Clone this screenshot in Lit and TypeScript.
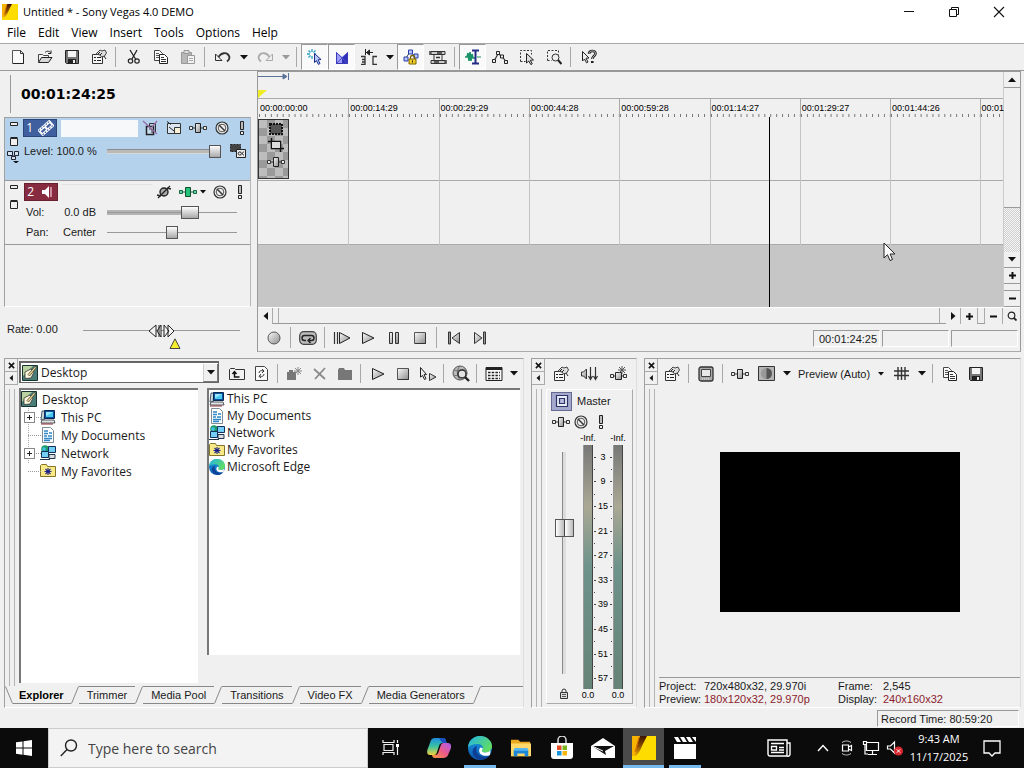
import { LitElement, html, svg, css, type TemplateResult } from "lit";
import { customElement, property } from "lit/decorators.js";

type Glyph = [number, number, TemplateResult];

const grey = svg`<defs><linearGradient id="g" x1="0" y1="0" x2="1" y2="1"><stop offset="0" stop-color="#fafafa"/><stop offset="1" stop-color="#8c8c8c"/></linearGradient></defs>`;
const pc = svg`<path d="M2 2h3l-1 9H1z" fill="#cfd6dc" stroke="#1c3950" stroke-width=".8"/><path d="M4.500 1.500h10v8h-10z" fill="#0b4fa0" stroke="#0a2a50"/><path d="M6 3h7v5H6z" fill="#4cc9f0"/><path d="M6 3h7L6 7z" fill="#9be8ff"/><path d="M2 11h12l1 3H1z" fill="#e3e6e8" stroke="#30363c" stroke-width=".8"/><path d="M1 15h12" stroke="#8c2a34"/>`;
const noEntry = svg`<circle cx="8" cy="8" r="6" fill="#eee" stroke="#333" stroke-width="1.2"/><circle cx="8" cy="8" r="3.800" fill="none" stroke="#555"/><path d="M5 5l6 6" stroke="#333" stroke-width="1.400"/>`;
const vegasMark = svg`<defs><linearGradient id="v" x1="0" y1="0" x2="0" y2="1"><stop offset="0" stop-color="#3a1400"/><stop offset=".5" stop-color="#8a4a00"/><stop offset="1" stop-color="#f0b000"/></linearGradient></defs><path d="M0 0h24v24H0z" fill="#ffdc00"/><path d="M0 0h9L4 20H0z" fill="#f6b400"/><path d="M8 0h7c-2 4-3 6-5 10-2 5-4 8-6 10l-1-1C4 13 6 6 8 0z" fill="url(#v)"/><path d="M7 1L3 16" stroke="#d86a00" fill="none"/>`;

const glyphs: Record<string, Glyph> = {
  vegas: [24, 24, vegasMark],
  min: [12, 12, svg`<path d="M1 5.500h10" stroke="#111" fill="none"/>`],
  restore: [12, 12, svg`<path d="M1.500 3.500h7v7h-7zM3.500 3V1.500h7v7H9" stroke="#111" fill="none"/>`],
  close: [12, 12, svg`<path d="M1 1l10 10M11 1L1 11" stroke="#111" fill="none" stroke-width="1.100"/>`],
  new: [16, 16, svg`<path d="M2.500 1.500h8l3 3v10h-11z" fill="#fafafa" stroke="#555"/><path d="M10.500 1.500v3h3" fill="none" stroke="#333"/><path d="M3 14.500h10.500V5" fill="none" stroke="#222"/>`],
  open: [16, 16, svg`<path d="M1.500 13V5.500h4l1 1h5v2" fill="#f4f4f4" stroke="#444"/><path d="M1.500 13.500l3-5h10.500l-3.500 5z" fill="#d8d8d8" stroke="#222"/><path d="M8 3.500c2-2 4-1.500 5.500 0M14 1.500v3h-3" fill="none" stroke="#222"/>`],
  save: [16, 16, svg`<path d="M1.500 1.500h13v13h-12l-1-1z" fill="#777" stroke="#222"/><path d="M4 2h8v6H4z" fill="#f4f4f4"/><path d="M4 10h8v4H4z" fill="#222"/><path d="M9 11h2v3H9z" fill="#eee"/>`],
  props: [16, 16, svg`<path d="M1.500 5.500h10v9h-10z" fill="#f6f6f6" stroke="#333"/><path d="M3 8.500h2M6 8.500h4M3 11.500h2M6 11.500h4" stroke="#222"/><path d="M5 5l4-4 2 1 3-1 1.500 3-2 3-3 1-1.500-2z" fill="#ddd" stroke="#444"/><path d="M7 5l2-2M9 6l2-2M13 7l2 3" stroke="#222"/>`],
  cut: [16, 16, svg`<path d="M4 1l5.500 9M11 1L6 10" stroke="#222" fill="none" stroke-width="1.300"/><circle cx="4.500" cy="12" r="2.200" fill="none" stroke="#222" stroke-width="1.200"/><circle cx="11" cy="12" r="2.200" fill="none" stroke="#222" stroke-width="1.200"/>`],
  copy: [16, 16, svg`<path d="M1.500 1.500h5l3 3v7h-8z" fill="#fafafa" stroke="#444"/><path d="M3 4.500h3M3 6.500h4M3 8.500h4" stroke="#555"/><path d="M6.500 5.500h5l3 3v6h-8z" fill="#fafafa" stroke="#222"/><path d="M8 8.500h3M8 10.500h5M8 12.500h5" stroke="#333"/>`],
  paste: [16, 16, svg`<path d="M1.500 3.500h10v11h-10z" fill="#b8b8b8" stroke="#999"/><path d="M4 1.500h5v3H4z" fill="#ddd" stroke="#999"/><path d="M7.500 6.500h7v8h-7z" fill="#f2f2f2" stroke="#999"/><path d="M9 9.500h4M9 11.500h4" stroke="#aaa"/>`],
  undo: [16, 16, svg`<path d="M3 9c3-6 9-6 11-2 1 2 0 4-2 5.500" fill="none" stroke="#333" stroke-width="1.800"/><path d="M.5 5v6.500H7z" fill="#eee" stroke="#333"/>`],
  redo: [16, 16, svg`<path d="M13 9C10 3 4 3 2 7c-1 2 0 4 2 5.500" fill="none" stroke="#aaa" stroke-width="1.800"/><path d="M15.500 5v6.500H9z" fill="#eee" stroke="#aaa"/>`],
  autocur: [16, 16, svg`<path d="M5 0v3M5 7v3M0 5h3M7 5h2M1.500 1.500l2 2M8.500 1.500l-2 2M1.500 8.500l2-2" stroke="#29a3c4" fill="none" stroke-width="1.300"/><path d="M7.500 4.500l6.500 6-3 .4 2 3.600-1.600.9-2-3.800-1.900 2z" fill="#b9c8ff" stroke="#1d2f86"/>`],
  xfade: [16, 16, svg`<path d="M2 3l6 5 6-5v12H2z" fill="#4646d8"/><path d="M14 3v12H2z" fill="#3030b8"/><path d="M2 3l6 5v7H2z" fill="#9c9cf6"/><path d="M2 3l12 12M14 3L2 15" stroke="#5050d0"/><path d="M2.500 4v10.500h11V4" stroke="#3a3ab8" fill="none"/>`],
  ripple: [18, 16, svg`<path d="M1 7.500h4v8H1M2 10.500h3M2 13h3M17 7.500h-4v8h4" fill="none" stroke="#333" stroke-width="1.300"/><path d="M5.500 0v6M6 3.500h7M6.500 3.500l3-2.500v5z" stroke="#222" fill="#222"/>`],
  lockenv: [16, 16, svg`<path d="M3 9l4-6 6 5" stroke="#444" fill="none"/><path d="M1 8h4v4H1zM5.500 1h4v4h-4zM11 5h4v4h-4z" fill="#b8c6ff" stroke="#2a3ea8"/><path d="M7.500 10V8.500a2 2 0 014 0V10" fill="none" stroke="#7a6200" stroke-width="1.300"/><path d="M6 10h7v5H6z" fill="#f2cf2a" stroke="#7a6200"/><path d="M9.500 11.500v2" stroke="#222"/>`],
  group: [18, 16, svg`<path d="M2 2.500h14v3H2zM2 11.500h14v3H2z" fill="#ccc" stroke="#333"/><path d="M5 5.500h8v6H5z" fill="#eee" stroke="#333"/><path d="M1 2v4M17 11v4M7 8.500h4M8 4h5M5 13h5" stroke="#333" stroke-width="1.400"/>`],
  normal: [18, 16, svg`<path d="M1 8h2l1-4 1 8 1-9 1 9 1-7 1 4h2" fill="none" stroke="#1a9468" stroke-width="1.600"/><path d="M8 1.500h7M11.500 1.500v13M8 14.500h7" stroke="#252c86" stroke-width="2"/><path d="M13 8h4" stroke="#1a9468"/>`],
  envtool: [16, 16, svg`<path d="M2 12l4-7 4 2 4 6" stroke="#333" fill="none" stroke-width="1.200"/><path d="M.5 10.500h3v3h-3zM4.500 2.500h3v3h-3zM8.500 6h3v3h-3zM12.500 11.500h3v3h-3z" fill="#eee" stroke="#222"/>`],
  seltool: [16, 16, svg`<path d="M1.500 12.500v-11h11v4M1.500 12.500h5" stroke="#333" stroke-dasharray="2 1.500" fill="none"/><path d="M7.500 4.500l7 6.500-3.200.3 2 3.500-1.500.8-2-3.600-2.300 2z" fill="#ddd" stroke="#222"/>`],
  zoomtool: [16, 16, svg`<path d="M1.500 11.500v-10h11v4M1.500 11.500h4" stroke="#333" stroke-dasharray="2 1.500" fill="none"/><circle cx="9.500" cy="8.500" r="3.500" fill="#eee" stroke="#333"/><path d="M12 11l3.500 4" stroke="#222" stroke-width="2"/>`],
  help: [16, 16, svg`<path d="M1.500 2.500l6.500 6.500-3 .2 2 3.800-1.500.8-2-3.800-2 2z" fill="#eee" stroke="#222"/><path d="M8 5c0-4 6.500-4 6.500-.5 0 2.500-3 2.500-3.200 5.500M11.300 12v2" fill="none" stroke="#222" stroke-width="2.600"/><path d="M8 5c0-4 6.500-4 6.500-.5 0 2.500-3 2.500-3.200 5.500" fill="none" stroke="#ddd" stroke-width=".8"/>`],
  down: [8, 5, svg`<path d="M0 0h8L4 4.500z" fill="#111"/>`],
  downoff: [8, 5, svg`<path d="M0 0h8L4 4.500z" fill="#999"/>`],
  tinydown: [6, 4, svg`<path d="M0 0h6L3 3.500z" fill="#111"/>`],
  up: [8, 5, svg`<path d="M0 5h8L4 .5z" fill="#111"/>`],
  left: [5, 8, svg`<path d="M5 0v8L.5 4z" fill="#111"/>`],
  right: [5, 8, svg`<path d="M0 0v8l4.500-4z" fill="#111"/>`],
  plus: [7, 7, svg`<path d="M0 3.500h7M3.500 0v7" stroke="#111" stroke-width="2"/>`],
  minus: [7, 7, svg`<path d="M0 3.500h7" stroke="#111" stroke-width="2"/>`],
  lens: [10, 10, svg`<circle cx="4.500" cy="4.500" r="3.300" fill="none" stroke="#222" stroke-width="1.200"/><path d="M7 7l2.500 2.500" stroke="#222" stroke-width="1.800"/>`],
  x: [8, 8, svg`<path d="M1 1l6 6M7 1L1 7" stroke="#111" stroke-width="1.800"/>`],
  mini: [8, 4, svg`<path d="M.5 .5h7v3h-7z" fill="#eee" stroke="#222"/>`],
  maxi: [8, 9, svg`<path d="M.5 1.500h7v7h-7zM.5 .5h7" fill="#eee" stroke="#222"/>`],
  tree: [13, 12, svg`<path d="M.5 .5h5v4h-5zM7.500 .5h4v4h-4zM4.500 5.500h4v3h-4zM6 4v2" fill="#d6e4f2" stroke="#223"/><path d="M6 10h6l-3 2.500z" fill="#111"/>`],
  film: [16, 16, svg`<g transform="rotate(-42 8 8)"><path d="M0 4h16v8H0z" fill="#fff"/><path d="M1 5.300h14M1 10.700h14" stroke="#3f5f9f" stroke-width="1.200" stroke-dasharray="1.500 1.500"/><path d="M2 7h5v2.200H2zM9 7h5v2.200H9z" fill="#3f5f9f"/></g>`],
  speaker: [16, 16, svg`<path d="M3 6h3l4-4v12l-4-4H3z" fill="#fff"/><path d="M12 3v10" stroke="#e3a7b5" stroke-width="1.600"/>`],
  bypass: [16, 16, svg`<path d="M4.500 6.500h7v8h-7z" fill="#ccdff2" stroke="#222" stroke-width="1.500"/><path d="M7 9h3v4M7.500 6V3.500h6V12" fill="none" stroke="#333"/><path d="M1 1l14 13M15 1l-5 6" stroke="#9a6aa8" stroke-width="1.200"/>`],
  motion: [16, 16, svg`<path d="M1.500 3.500h13v10h-13z" fill="#dbe8f4" stroke="#333"/><path d="M1 1.500l4 3M3 7l5 4" stroke="#222"/><path d="M8.500 7.500h6v6h-6z" fill="#f7f1d8" stroke="#333"/>`],
  fx: [18, 12, svg`${grey}<path d="M4 6h10" stroke="#333"/><path d="M.5 4.500h3v3h-3zM14.500 4.500h3v3h-3z" fill="#eee" stroke="#333"/><path d="M6.500 1.500h5v9h-5z" fill="url(#g)" stroke="#222"/>`],
  fxgreen: [18, 12, svg`<path d="M4 6h10" stroke="#176443"/><path d="M.5 4.500h3v3h-3zM14.500 4.500h3v3h-3z" fill="#5fd8a0" stroke="#176443"/><path d="M6.500 1.500h5v9h-5z" fill="#25c079" stroke="#14502f"/>`],
  mute: [16, 16, noEntry],
  solo: [6, 14, svg`<path d="M1.500 .5h3v8h-3z" fill="#bbb" stroke="#222"/><path d="M1.500 10.500h3v3h-3z" fill="#eee" stroke="#222"/>`],
  comp: [16, 16, svg`<path d="M.5 1.500h10v7H.5z" fill="#444" stroke="#222" stroke-dasharray="2 1"/><path d="M6.500 6.500h9v8h-9z" fill="#eee" stroke="#222"/><circle cx="9.800" cy="10.500" r="1.600" fill="none" stroke="#222"/><path d="M14 9c-2-.5-2 3.500 0 3" stroke="#222" fill="none"/>`],
  arm: [16, 16, svg`<circle cx="8" cy="8" r="4" fill="#aaa" stroke="#222" stroke-width="1.400"/><path d="M2 14L14 2M1 11l4 1M11 4l4 1" stroke="#222" stroke-width="1.300"/>`],
  record: [14, 14, svg`${grey}<circle cx="7" cy="7" r="6" fill="url(#g)" stroke="#555"/>`],
  loop: [18, 14, svg`<rect x=".7" y=".7" width="16.600" height="12.600" rx="4" fill="#bbb" stroke="#444" stroke-width="1.200"/><path d="M7 9.500H5.500a2.500 2.500 0 010-5h7a2.500 2.500 0 010 5H10M11.500 7L9 9.500l2.500 2.500" fill="none" stroke="#222" stroke-width="1.400"/>`],
  playstart: [18, 14, svg`${grey}<path d="M1.500 1v12M4.500 1v12" stroke="#333" stroke-width="1.200"/><path d="M6.500 1.500L17 7 6.500 12.500z" fill="url(#g)" stroke="#222"/>`],
  play: [14, 14, svg`${grey}<path d="M1.500 1.500L13 7 1.500 12.500z" fill="url(#g)" stroke="#222"/>`],
  pause: [14, 14, svg`${grey}<path d="M2.500 1.500h3v11h-3zM8.500 1.500h3v11h-3z" fill="url(#g)" stroke="#333"/>`],
  stop: [14, 14, svg`${grey}<path d="M1.500 1.500h11v11h-11z" fill="url(#g)" stroke="#555"/><path d="M12.500 2v10.500H2" fill="none" stroke="#333"/>`],
  prev: [14, 14, svg`${grey}<path d="M1.500 1h2v12h-2z" fill="#999" stroke="#333"/><path d="M12.500 1.500v11L5 7z" fill="url(#g)" stroke="#333"/>`],
  next: [14, 14, svg`${grey}<path d="M10.500 1h2v12h-2z" fill="#999" stroke="#333"/><path d="M1.500 1.500v11L9 7z" fill="url(#g)" stroke="#333"/>`],
  updir: [16, 16, svg`<path d="M.5 13.500v-10l1-1h4l1 1h9v10z" fill="#f2f2f2" stroke="#333"/><path d="M5.500 6v5h5M3.500 8l2-2.500 2 2.500" fill="none" stroke="#111" stroke-width="1.400"/>`],
  refresh: [16, 16, svg`<path d="M1.500 .5h9l3 3v11h-12z" fill="#fafafa" stroke="#444"/><path d="M5 7c0-2 2-3 4-2M8 3l2 2-2 2M10 8c0 2-2 3-4 2M7 8l-2 2.300L7 12" fill="none" stroke="#333"/>`],
  newdir: [16, 14, svg`<path d="M0 5h9v8H0z" fill="#777"/><path d="M2 3h4v2H2z" fill="#777"/><path d="M11 0v8M7 4h8M8 1l6 6M14 1L8 7" stroke="#888"/>`],
  del: [14, 14, svg`<path d="M1 2l11 10M12 1L2 12" stroke="#888" stroke-width="1.700"/>`],
  fold: [16, 14, svg`<path d="M1 3l1-2h5l1 2h7v10H1z" fill="#777"/>`],
  auto: [18, 16, svg`${grey}<path d="M1.500 1.500l6 7-2.500.2 2 4-1.500.8-2-4-2 1.600z" fill="#eee" stroke="#222"/><path d="M10.500 7.500l6.500 3.500-6.500 3.500z" fill="url(#g)" stroke="#333"/>`],
  webfind: [18, 18, svg`<circle cx="8" cy="8" r="7" fill="#bbb" stroke="#555"/><path d="M2 5c3 2 9-2 12 1M2 11c4-2 5 2 9 1M8 1c-4 4-3 10 0 14" stroke="#666" fill="none"/><circle cx="10" cy="9" r="4" fill="#e4e4e4" stroke="#333" stroke-width="1.500"/><path d="M13 12l4 4" stroke="#222" stroke-width="2.400"/>`],
  views: [18, 14, svg`<path d="M1 .5h16v13H1z" fill="#fafafa" stroke="#222"/><path d="M1 2h16" stroke="#222" stroke-width="2"/><path d="M3 5.500h12M3 8.500h12M3 11.500h12" stroke="#222" stroke-dasharray="2.500 1.200" stroke-width="1.300"/>`],
  desktop: [16, 16, svg`<path d="M.5 .5h15v15H.5z" fill="#4b7d78" stroke="#173330"/><path d="M1 1h10L1 11z" fill="#b9d0a0"/><path d="M3 7l6-3 3 3-3 6-6 .5z" fill="#fff8de" stroke="#333" stroke-width=".8"/><path d="M6 9.500L13 1.500l1.500 1L7.500 11z" fill="#e9d48a" stroke="#333" stroke-width=".7"/>`],
  pc: [16, 16, pc],
  docs: [16, 16, svg`<path d="M2.500 .5h8l3 3v12h-11z" fill="#fff" stroke="#7d8b96"/><path d="M4 4h4M9 6h3M4 6.500h4M4 9h3M8 9h4M4 11.500h8M4 13.500h6" stroke="#2c86c8" stroke-width="1.300"/>`],
  net: [16, 16, svg`<circle cx="5" cy="4" r="3.800" fill="#1c9b66"/><path d="M3 2l3 1-1 3-3-1z" fill="#46bfe8"/><path d="M8.500 1.500h7v6h-7zM1.500 6.500h7v6h-7z" fill="#73cdf4" stroke="#12305c"/><path d="M9 9.500h6v4H9zM0 14.500h10" fill="#d9dee3" stroke="#22374c"/>`],
  fav: [16, 16, svg`<path d="M.5 13.500v-11l1-1h5l1 2h8v10z" fill="#f8e987" stroke="#84742a"/><path d="M8 5v7M4.500 8.500h7M5.500 6l5 5M10.500 6l-5 5" stroke="#1e2487" stroke-width="1.100"/>`],
  edge: [24, 24, svg`<defs><linearGradient id="e1" x1="0" y1="0" x2="1" y2=".6"><stop offset="0" stop-color="#20b4e8"/><stop offset="1" stop-color="#62dd62"/></linearGradient><linearGradient id="e2" x1="0" y1="0" x2="0" y2="1"><stop offset="0" stop-color="#1da1e6"/><stop offset="1" stop-color="#0b55ab"/></linearGradient></defs><circle cx="12" cy="12" r="12" fill="url(#e2)"/><path d="M0 11C1 4 6 0 12 0c7 0 12 5 12 10 0 4-3 6.500-6.500 6.500-3 0-4.500-1.500-3-3 1-2 0-5-4-5.500C6 7.500 2 9 0 11z" fill="url(#e1)"/><path d="M9 10c-2 4 0 11 8 11 2 0 4-1 5-2-4 6-12 6-16 1-3-4-1-9 3-10z" fill="#0d3f94"/><path d="M14.500 13.500c-1.500 1.500 0 3 3 3 2 0 3.500-.7 5-2l-.500 4.500c-3 1.500-8 1-10-1.500-1.500-2-1-5 .5-6 2 0 2.500 1 2 2z" fill="#fff"/>`],
  vol3d: [20, 16, svg`${grey}<path d="M1.500 6h2l3-3v10l-3-3h-2z" fill="url(#g)" stroke="#333"/><path d="M10.500 1v12M15.500 1v12M8.500 10l2 3.500 2-3.500M13.500 10l2 3.500 2-3.500" stroke="#333" fill="none" stroke-width="1.200"/>`],
  addfx: [18, 16, svg`${grey}<path d="M2 10h13" stroke="#333"/><path d="M.5 8.500h3v3h-3zM13.500 8.500h3v3h-3z" fill="#eee" stroke="#333"/><path d="M5.500 6.500h6v7h-6z" fill="url(#g)" stroke="#222"/><path d="M12 0v8M8 4h8M9 1l6 6M15 1L9 7" stroke="#555"/>`],
  extmon: [16, 16, svg`<rect x="1" y="1" width="14" height="14" rx="2" fill="#aaa" stroke="#333" stroke-width="1.300"/><path d="M3.500 3.500h9v7h-9z" fill="#e8e8e8" stroke="#444"/><path d="M4 13h8" stroke="#eee" stroke-dasharray="1 1"/>`],
  split: [17, 15, svg`<path d="M.5 .5h16v14H.5z" fill="#b5b5b5" stroke="#333"/><circle cx="8.500" cy="7.500" r="5.500" fill="#999"/><path d="M8.500 2a5.500 5.500 0 010 11z" fill="#555"/>`],
  hash: [15, 13, svg`<path d="M4 0v13M7.500 0v13M11 0v13M0 4h15M0 8.500h15" stroke="#333" stroke-width="1.400"/>`],
  bus: [18, 16, svg`<path d="M3.500 2.500h11v11h-11z" fill="#eceef8" stroke="#2d3468" stroke-width="1.200"/><path d="M6.500 5.500h5v5h-5z" fill="#b8bde0" stroke="#2d3468" stroke-width="1.200"/>`],
  lock: [8, 11, svg`<path d="M2 5V3a2 2 0 014 0v2" fill="none" stroke="#333"/><path d="M.5 4.500h7v6h-7z" fill="#ddd" stroke="#333"/><path d="M2 6.500h4M2 8.500h4" stroke="#555"/>`],
  crop: [16, 14, svg`<path d="M3.500 0v10.500H16M0 3.500h12.500V14" fill="none" stroke="#111" stroke-width="1.500"/><path d="M4 4h8v6H4z" fill="#ddd"/>`],
  media: [14, 12, svg`<path d="M1 1h12v10H1z" fill="#555" stroke="#111" stroke-width="2" stroke-dasharray="2 1"/>`],
  pointer: [14, 20, svg`<path d="M1 1v15l3.500-3.300L7 18.500l2.500-1-2.400-5.500H12z" fill="#fff" stroke="#222"/>`],
  win: [16, 16, svg`<path d="M0 2.300L6.500 1.400v6.200H0zM7.500 1.200L16 0v7.600H7.500zM0 8.500h6.500v6.200L0 13.800zM7.500 8.500H16V16l-8.500-1.200z" fill="#fff"/>`],
  search: [18, 18, svg`<circle cx="11" cy="6.500" r="5.500" fill="none" stroke="#222" stroke-width="1.400"/><path d="M7 10.500L.8 17" stroke="#222" stroke-width="1.400"/>`],
  taskview: [18, 18, svg`<path d="M2 5.500h9v6H2zM1 1v2.500h11V1M1 16v-2.500h11V16M15.500 1v3M15.500 8v8" fill="none" stroke="#eee" stroke-width="1.200"/><path d="M14 5h3v3h-3z" fill="#fff"/>`],
  copilot: [24, 24, svg`<defs><linearGradient id="c1" x1="0" y1="0" x2="0" y2="1"><stop offset="0" stop-color="#1d8de0"/><stop offset=".5" stop-color="#3bc3a0"/><stop offset="1" stop-color="#f4d13c"/></linearGradient><linearGradient id="c2" x1="1" y1="0" x2="0" y2="1"><stop offset="0" stop-color="#a85cf0"/><stop offset=".5" stop-color="#ee5a88"/><stop offset="1" stop-color="#fb9a3c"/></linearGradient></defs><path d="M8 2h8c2 0 2.500 1 3 3l.5 2h-4c-2 0-3 1-3.500 3l-2 6c-.5 2-1.500 3-3 3H3C0 19-.3 16 .5 13.500l3-8C4 3.500 5.500 2 8 2z" fill="url(#c1)"/><path d="M16 22H8c-2 0-2.500-1-3-3h3c2 0 3-1 3.500-3l2-6c.5-2 1.500-3 3-3H21c3 0 3.500 3 2.800 5.500l-3 7C20 21 18.500 22 16 22z" fill="url(#c2)"/><path d="M12 2h4c2 0 2.500 1 3 3l.5 2h-4z" fill="#194fc0"/>`],
  files: [24, 22, svg`<path d="M1 2h8l2 2h11v16H1z" fill="#e8a920"/><path d="M1 6h22v14H1z" fill="#ffd869"/><path d="M4 13h16v7h-4v-3H8v3H4z" fill="#1c87d8"/><path d="M5 11h14l1 3H4z" fill="#55b7f0"/>`],
  store: [24, 24, svg`<path d="M8 7V4a4 4 0 018 0v3" fill="none" stroke="#ddd" stroke-width="1.500"/><path d="M1 7h22v13a3 3 0 01-3 3H4a3 3 0 01-3-3z" fill="#fff"/><path d="M7 9.500h4.500V14H7z" fill="#e64a25"/><path d="M12.500 9.500H17V14h-4.500z" fill="#7ab51d"/><path d="M7 15h4.500v4.500H7z" fill="#1596dc"/><path d="M12.500 15H17v4.500h-4.500z" fill="#f5b50a"/>`],
  mail: [24, 20, svg`<path d="M0 8l12-8 12 8v12H0z" fill="#fff"/><path d="M1 8h22l-9 5 1 4z" fill="#111"/><path d="M1 8l11 5" stroke="#fff"/>`],
  clap: [24, 24, svg`<path d="M1 8h22v15H1z" fill="#fff"/><path d="M1 1h4l3 5H4zM7 1h4l3 5h-4zM13 1h4l3 5h-4zM19 1h4v5z" fill="#fff"/>`],
  news: [24, 18, svg`<path d="M1 1h19v16H3a2 2 0 01-2-2zM20 4h3v11a2 2 0 01-3 2" fill="none" stroke="#fff" stroke-width="1.400"/><path d="M4 4.500h13M12 8.500h5M12 11h5M4 13.500h13" stroke="#fff" stroke-width="1.300"/><path d="M4.500 7.500h5v3.500h-5z" fill="none" stroke="#fff" stroke-width="1.300"/>`],
  chev: [12, 8, svg`<path d="M1 7l5-5.500L11 7" fill="none" stroke="#fff" stroke-width="1.400"/>`],
  meet: [14, 16, svg`<path d="M2.500 5h6v6h-6zM8.500 7l3-1.500v5L8.500 9" fill="none" stroke="#fff" stroke-width="1.200"/><path d="M2 2.500c3-2 6-2 9 0M2 13.500c3 2 6 2 9 0" fill="none" stroke="#ccc"/>`],
  lan: [18, 16, svg`<path d="M4.500 2.500h12v8h-12zM10.500 11v3M6 14.500h9M1.500 1.500h3v3h-3zM3 5v9h3" fill="none" stroke="#fff" stroke-width="1.200"/>`],
  sound: [18, 16, svg`<path d="M1.500 6h3l4-4v11l-4-4h-3z" fill="none" stroke="#fff" stroke-width="1.200"/><circle cx="12.500" cy="11" r="4.500" fill="#d8262c"/><path d="M10.800 9.300l3.400 3.400M14.200 9.300l-3.400 3.400" stroke="#fff"/>`],
  note: [18, 17, svg`<path d="M1 1h16v12h-5l-3 3-3-3H1z" fill="none" stroke="#fff" stroke-width="1.300"/>`],
};

/** One glyph from the application's icon set. */
@customElement("ui-icon")
class UiIcon extends LitElement {
  @property() name = "";
  @property({ type: Number }) size = 0;

  static styles = css`
    :host { display: inline-flex; flex: none; vertical-align: middle; }
    svg { display: block; }
  `;

  render() {
    const [w, h, body] = glyphs[this.name];
    const width = this.size || w;
    const height = this.size ? Math.round((this.size * h) / w) : h;
    return html`<svg width=${width} height=${height} viewBox="0 0 ${w} ${h}" aria-hidden="true">${body}</svg>`;
  }
}

const icon = (name: string, size = 0) => html`<ui-icon name=${name} size=${size}></ui-icon>`;
const btn = (name: string, label: string, cls = "") =>
  html`<button class="tb ${cls}" aria-label=${label}>${icon(name)}</button>`;
const sep = html`<span class="sep"></span>`;

const timecodes = ["00:00:00:00", "00:00:14:29", "00:00:29:29", "00:00:44:28", "00:00:59:28", "00:01:14:27", "00:01:29:27", "00:01:44:26", "00:01"];
const places = [
  { name: "This PC", glyph: "pc", open: true },
  { name: "My Documents", glyph: "docs", open: false },
  { name: "Network", glyph: "net", open: true },
  { name: "My Favorites", glyph: "fav", open: false },
];

@customElement("app-root")
class AppRoot extends LitElement {
  static styles = css`
    :host {
      display: flex; flex-direction: column; height: 100vh; overflow: hidden;
      background: #f0f0f0; color: #1a1a1a;
      font: 11px/14px "Liberation Sans", Arial, sans-serif; cursor: default;
    }
    * { box-sizing: border-box; }
    button, input, select { font: inherit; color: inherit; margin: 0; padding: 0; border: 0; background: none; border-radius: 0; outline: none; }
    ul { list-style: none; margin: 0; padding: 0; }
    .ui { font-family: "Open Sans", "Noto Sans", sans-serif; font-size: 12px; }
    .row { display: flex; align-items: center; }
    .grow { flex: 1; min-width: 0; }

    .title { display: flex; align-items: center; height: 23px; background: #fff; padding: 0 3px 0 2px; gap: 5px; flex: none; font-size: 11px; color: #000; }
    .caption { width: 45px; height: 20px; display: grid; place-items: center; }
    .menu { display: flex; height: 20px; background: #fff; flex: none; padding-left: 1px; color: #000; }
    .menu button { padding: 0 6px; }

    .bar { display: flex; align-items: stretch; }
    .main-bar { height: 28px; flex: none; padding-left: 4px; border-top: 1px solid #a8a8a8; border-bottom: 1px solid #999; }
    .tb { display: grid; place-items: center; width: 27px; flex: none; }
    .bar26 .tb { width: 26px; }
    .bar25 .tb { width: 25px; }
    .bar29 .tb { width: 29px; }
    .bar .arrow { width: 15px; }
    .on { background: #fafafa; border: 1px solid #999; border-right-color: #fff; border-bottom-color: #fff; }
    .sep { width: 8px; flex: none; padding: 3px 0; }
    .sep::before { content: ""; display: block; width: 1px; height: 100%; margin-left: 3px; background: #a8a8a8; }

    .edit { display: grid; grid-template-columns: 257px minmax(0, 1fr); flex: none; padding-right: 3px; }
    .side { display: flex; flex-direction: column; padding: 0 6px 0 4px; }
    .clock { height: 46px; padding: 4px 0 4px 6px; }
    .clock div { height: 100%; border-left: 1px solid #999; padding-left: 10px; display: flex; align-items: center; font: bold 14px/20px "DejaVu Sans", Verdana, sans-serif; color: #000; }
    .tracks { border: 1px solid #a0a0a0; border-right-color: #b8b8b8; border-bottom-color: #fff; height: 190px; }
    .track { height: 64px; display: grid; grid-template-columns: 18px minmax(0, 1fr); border-bottom: 1px solid #999; }
    .track.video { background: #b4d2ec; height: 63px; }
    .knobs { display: flex; flex-direction: column; align-items: center; padding: 4px 1px 0 0; gap: 11px; }
    .knobs button { display: grid; place-items: center; }
    .knobs button:nth-child(3) { margin-top: -6px; }
    .line { display: flex; align-items: center; height: 20px; }
    .video .line:nth-child(2) { margin-top: 3px; }
    .audio .line:first-child { margin-top: 1px; }
    .badge { width: 34px; height: 18px; display: flex; align-items: center; justify-content: space-around; color: #fff; background: #3f5f9f; border: 1px solid #2c4576; flex: none; }
    .audio .badge { background: #872c40; border-color: #66202f; margin-left: 1px; }
    .name { flex: 1; min-width: 0; width: 0; height: 17px; margin-left: 4px; }
    .video .name { background: #f6f8fa; }
    .audio .name { border-top: 1px solid #e2e2e2; }
    .line .tb { width: 24px; }
    .line .slim { width: 16px; }
    .line .wide { width: 32px; display: flex; align-items: center; justify-content: center; gap: 3px; }
    .audio .line { padding-right: 2px; }
    .lbl { width: 84px; padding-left: 1px; flex: none; white-space: nowrap; }
    .audio .lbl { display: flex; justify-content: space-between; padding: 0 11px 0 3px; }

    input[type="range"] { appearance: none; -webkit-appearance: none; display: block; height: 16px; background: linear-gradient(#999, #999) center / 100% 1px no-repeat; }
    input[type="range"]::-webkit-slider-thumb { -webkit-appearance: none; width: 12px; height: 13px; border: 1px solid #555; background: linear-gradient(#fdfdfd, #a9a9a9); }
    input.level { width: 114px; background: linear-gradient(#8d8d8d 1px, #b9b9b9 1px, #b9b9b9 4px, #d8d8d8 4px) center / 100% 5px no-repeat; }
    input.vol { width: 130px; background: linear-gradient(#999, #999) center / 100% 1px no-repeat, linear-gradient(#b4b4b4, #b4b4b4) left center / 60% 5px no-repeat; }
    input.vol::-webkit-slider-thumb { width: 18px; }
    input.pan { width: 130px; }
    .push { margin-left: auto; }

    .rate { display: flex; align-items: center; height: 44px; padding: 3px 0 0 3px; }
    .rate .lbl { width: 76px; padding: 0; margin-top: -4px; }
    .shuttle { position: relative; width: 157px; }
    input.jog { width: 100%; }
    input.jog::-webkit-slider-thumb { width: 28px; height: 14px; border: 0; background: url('data:image/svg+xml,<svg xmlns="http://www.w3.org/2000/svg" width="28" height="14"><path d="M8 1L1 7l7 6zM11 1v12M13 1v12l-4-6zM16 1v12l5-6zM20 1v12l6-6z" fill="%23f4f4f4" stroke="%23222"/></svg>') center no-repeat; }
    .mark { position: absolute; left: 55%; top: 15px; }

    .stage { display: flex; flex-direction: column; border: 1px solid #999; border-bottom-color: #aaa; position: relative; }
    .canvas { display: grid; grid-template-columns: minmax(0, 1fr) 17px; }
    .time { position: relative; min-width: 0; }
    .markers { height: 27px; border-bottom: 1px solid #aaa; display: flex; flex-direction: column; justify-content: space-between; align-items: flex-start; }
    .markers svg { display: block; }
    .cells { display: grid; grid-template-columns: repeat(8, minmax(0, 12fr)) minmax(0, 3fr); }
    .ruler { height: 18px; font-size: 9px; line-height: 18px; color: #000; }
    .ruler span { border-left: 1px solid #aaa; padding-left: 1px; white-space: nowrap; background: linear-gradient(90deg, #777 1px, transparent 1px) left bottom / calc(100% / 15) 3px repeat-x; }
    .ruler span:first-child { border-left-color: transparent; }
    .ruler span:last-child { padding-left: 0; background-size: 6px 3px; }
    .lane { height: 64px; border-bottom: 1px solid #aaa; }
    .lane.blank { height: 62px; background: #c6c6c6; border: 0; }
    .lanes { position: relative; }
    .grid { position: absolute; inset: 0 0 62px; pointer-events: none; }
    .grid span + span { border-left: 1px solid #c4c4c4; }
    .clip { position: relative; width: 31px; height: 60px; border: 1px solid #333; display: flex; flex-direction: column; align-items: center; justify-content: space-around; padding: 1px 0 8px 5px; background: conic-gradient(#9a9a9a 25%, #bdbdbd 0 50%, #9a9a9a 0 75%, #bdbdbd 0) 0 0 / 16px 16px; }
    .lane.video { padding-top: 2px; }
    .playhead { position: absolute; left: 68.6%; top: 0; bottom: 0; width: 1px; background: #000; }
    .pointer { position: absolute; left: 625px; top: 170px; }

    .vs { display: flex; flex-direction: column; border-left: 1px solid #ccc; background: #f0f0f0; }
    .sb { display: grid; place-items: center; width: 16px; height: 16px; flex: none; background: #f0f0f0; }
    .vs .sb { border-bottom: 1px solid #999; }
    .vthumb { height: 120px; border-bottom: 1px solid #999; }
    .vgap { height: 7px; border-bottom: 1px solid #999; }
    .dither { flex: 1; background: repeating-conic-gradient(#d0d0d0 0 25%, #f4f4f4 0 50%) 0 0 / 2px 2px; }
    .hs { display: flex; height: 17px; border-bottom: 1px solid #999; border-top: 1px solid #fff; }
    .hs .sb { width: 15px; border-right: 1px solid #aaa; }
    .hthumb { flex: 1; margin: 0 6px 0 5px; border: 1px solid #aaa; border-width: 0 1px; }
    .gap { width: 7px; border-right: 1px solid #aaa; }
    .hs .sb:nth-last-child(2) { width: 18px; }
    .hs .sb:last-child { width: 17px; border: 0; }
    .hs .sb:nth-child(4) { width: 17px; }
    .transport { height: 27px; padding-left: 3px; }
    .sink { border: 1px solid #999; border-right-color: #fff; border-bottom-color: #fff; height: 17px; width: 67px; margin: 6px 2px 0 0; padding-left: 5px; line-height: 16px; white-space: nowrap; }

    .docks { flex: 1; min-height: 0; display: grid; grid-template-columns: 520px 106px minmax(0, 1fr); gap: 7px; padding: 6px 3px 0 4px; }
    .dock { display: flex; flex-direction: column; min-width: 0; min-height: 0; border: 1px solid #a0a0a0; border-right-color: #ddd; border-bottom-color: #fff; }
    .inner { flex: 1; display: flex; min-height: 0; }
    .grip { width: 13px; display: flex; flex-direction: column; align-items: center; flex: none; }
    .grip button { width: 13px; height: 13px; display: grid; place-items: center; border: 1px solid #aaa; border-width: 0 1px 1px 0; }
    .grip::after { content: ""; flex: 1; width: 4px; margin-top: 4px; border: 1px solid #b4b4b4; border-width: 0 1px; }
    .body { flex: 1; display: flex; flex-direction: column; min-width: 0; padding-left: 1px; }
    .body > .bar { height: 25px; margin-top: 2px; flex: none; }
    .combo { display: flex; align-items: center; width: 200px; height: 22px; background: #fff; border: 1px solid #666; border-width: 2px 1px 1px 2px; padding-left: 1px; margin-right: 5px; flex: none; align-self: flex-start; }
    .combo select { appearance: none; flex: 1; padding-left: 3px; height: 18px; }
    .combo span { width: 15px; height: 18px; display: grid; place-items: center; background: #f0f0f0; border: 1px solid #777; border-width: 0 1px 1px 0; border-left: 1px solid #ccc; }
    .panes { flex: 1; min-height: 0; display: grid; grid-template-columns: 179px minmax(0, 1fr); gap: 9px; padding: 2px 3px 3px 0; }
    .pane { background: #fff; border: 1px solid #777; border-width: 2px 0 0 2px; line-height: 17px; }
    .files { margin-bottom: 28px; }
    .pane li { display: flex; align-items: center; gap: 2px; height: 17px; }
    .tree li { height: 18px; gap: 5px; }
    .tree .branch { display: block; height: auto; }
    .branch li { padding-left: 3px; }
    .tw { position: relative; width: 17px; height: 18px; margin-right: -6px; display: flex; align-items: center; background: linear-gradient(#aaa 1px, transparent 1px) 4px 0 / 1px 2px repeat-y; }
    .tw::after { content: ""; flex: 1; margin-left: 4px; height: 0; border-top: 1px dotted #999; }
    .tw.box::before { content: ""; width: 9px; height: 9px; border: 1px solid #888; background: linear-gradient(#222, #222) center / 5px 1px no-repeat, linear-gradient(#222, #222) center / 1px 5px no-repeat, #fff; }
    .tw.box::after { margin-left: 1px; }
    .branch li:last-child .tw { background-size: 1px 2px; background-repeat: no-repeat; }
    .tabs { display: flex; height: 18px; margin-bottom: 3px; flex: none; }
    .tabs button { border-bottom: 1px solid #888; border-top: 1px solid #888; padding: 0 8px; white-space: nowrap; }
    .tabs button.active { font-weight: bold; border-top-color: transparent; padding: 0 7px 0 6px; color: #000; }
    .tabs svg { display: block; flex: none; }
    .tabs .rest { flex: 1; border-top: 1px solid #888; }

    .mixer { flex: 1; min-height: 0; margin: 3px 3px 3px 0; border: 1px solid #fff; border-right-color: #aaa; border-bottom-color: #aaa; padding: 1px 4px 0; display: flex; flex-direction: column; }
    .master { gap: 5px; height: 20px; flex: none; }
    .master button { width: 21px; height: 19px; display: grid; place-items: center; background: #a4a8cc; border: 1px solid #656a92; }
    .master span { font-size: 11px; }
    .minis { height: 21px; flex: none; }
    .minis .tb { width: 20px; }
    .strip { flex: 1; min-height: 0; display: grid; grid-template-columns: 20px minmax(0, 1fr); gap: 12px; }
    .fader { display: flex; flex-direction: column; align-items: center; padding: 20px 0 4px 6px; gap: 14px; }
    input.gain { flex: 1; min-height: 0; width: 20px; writing-mode: vertical-lr; direction: rtl; background: linear-gradient(90deg, #888 1px, #ddd 1px) center / 4px 100% no-repeat; }
    input.gain::-webkit-slider-thumb { width: 19px; height: 18px; background: linear-gradient(90deg, #fff, #bbb 8px, #444 8px, #444 9px, #fff 9px, #bbb); }
    .meters { display: grid; grid-template: 13px minmax(0, 1fr) 14px / 10px 20px 10px; font-size: 9px; line-height: 12px; color: #000; }
    .meters > span { justify-self: center; white-space: nowrap; }
    .meter { background: linear-gradient(#777, #aaa894 25%, #6d938a 50%, #668377); border-right: 1px solid #444; border-left: 1px solid #999; }
    .scale { display: flex; flex-direction: column; padding: 6px 1px 4px; }
    .scale li { flex: 1; min-height: 0; display: flex; align-items: center; justify-content: space-between; line-height: 9px; }
    .scale li::before, .scale li::after { content: ""; width: 1px; height: 1px; background: #444; }
    .scale li.major::before, .scale li.major::after { width: 2px; }

    .quality { padding-left: 4px; white-space: nowrap; width: 79px; text-align: left; }
    .screen { flex: 1; display: grid; place-items: center; }
    .screen div { width: 240px; height: 160px; background: #000; }
    .info { margin: 0; border-top: 1px solid #999; display: grid; grid-template-columns: 45px 134px 45px minmax(0, 1fr); line-height: 13px; padding: 2px 0 1px; white-space: nowrap; }
    .info dt, .info dd { margin: 0; }
    .red { color: #8c1c2c; }
    .status { height: 20px; flex: none; display: flex; justify-content: flex-end; padding: 2px 5px 1px; }
    .status div { width: 142px; border: 1px solid #999; border-right-color: #fff; border-bottom-color: #fff; padding-left: 3px; line-height: 17px; }

    .taskbar { height: 40px; flex: none; background: #0b0b0b; color: #fff; display: flex; align-items: stretch; }
    .taskbar button { display: grid; place-items: center; flex: none; width: 41px; }
    .taskbar .start { width: 48px; }
    .find { width: 320px; background: #f3f3f3; border: 1px solid #ccc; display: flex; align-items: center; padding-left: 11px; gap: 10px; }
    .find input { flex: 1; min-width: 0; height: 30px; font: 14px/20px "Open Sans", "Noto Sans", sans-serif; color: #444; }
    .find input::placeholder { color: #444; opacity: 1; }
    .taskbar .view { width: 46px; margin-right: 4px; }
    .run { background: linear-gradient(#76b9ed, #76b9ed) bottom / 32px 3px no-repeat; }
    .taskbar .current { background-size: 100% 3px; background-color: #4a4a4a; }
    .tray { margin-left: auto; display: flex; }
    .taskbar .tray button { width: 24px; }
    .taskbar .tray .news { width: 40px; margin-right: 12px; }
    .taskbar .tray .when { width: 64px; line-height: 18px; font-family: "Open Sans", "Noto Sans", sans-serif; font-size: 11px; white-space: nowrap; }
    .taskbar .tray .bell { width: 42px; }
    .peek { width: 11px; }
  `;

  private dockGrip() {
    return html`<div class="grip">
      <button aria-label="Close panel">${icon("x", 7)}</button>
      <button aria-label="Collapse panel">${icon("left", 4)}</button>
    </div>`;
  }

  private mainBar() {
    return html`<div class="bar main-bar" role="toolbar" aria-label="Main">
      ${btn("new", "New")}${btn("open", "Open")}${btn("save", "Save")}${btn("props", "Properties")}${sep}
      ${btn("cut", "Cut")}${btn("copy", "Copy")}${btn("paste", "Paste")}${sep}
      ${btn("undo", "Undo")}${btn("down", "Undo list", "arrow")}${btn("redo", "Redo")}${btn("downoff", "Redo list", "arrow")}${sep}
      ${btn("autocur", "Quantize to frames", "on")}${btn("xfade", "Automatic crossfades", "on")}${btn("ripple", "Ripple edits")}${btn("down", "Ripple options", "arrow")}
      ${btn("lockenv", "Lock envelopes to events", "on")}${btn("group", "Ignore event grouping")}${sep}
      ${btn("normal", "Normal edit tool", "on")}${btn("envtool", "Envelope edit tool")}${btn("seltool", "Selection edit tool")}${btn("zoomtool", "Zoom edit tool")}${sep}
      ${btn("help", "What's this help")}
    </div>`;
  }

  private trackList() {
    return html`<div class="side">
      <div class="clock"><div>00:01:24:25</div></div>
      <div class="tracks">
        <section class="track video">
          <div class="knobs">
            <button aria-label="Minimize track">${icon("mini")}</button>
            <button aria-label="Maximize track">${icon("maxi")}</button>
            <button aria-label="Compositing parent">${icon("tree")}</button>
          </div>
          <div>
            <div class="line">
              <button class="badge ui" aria-label="Track 1">1 ${icon("film")}</button>
              <input class="name" aria-label="Track 1 name" />
              ${btn("bypass", "Bypass motion blur")}${btn("motion", "Track motion")}${btn("fx", "Track effects")}${btn("mute", "Mute")}${btn("solo", "Solo", "slim")}
            </div>
            <div class="line">
              <label class="lbl" for="level">Level: 100.0 %</label>
              <input class="level" id="level" type="range" value="100" />
              ${btn("comp", "Compositing mode", "push")}
            </div>
          </div>
        </section>
        <section class="track audio">
          <div class="knobs">
            <button aria-label="Minimize track">${icon("mini")}</button>
            <button aria-label="Maximize track">${icon("maxi")}</button>
          </div>
          <div>
            <div class="line">
              <button class="badge ui" aria-label="Track 2">2 ${icon("speaker")}</button>
              <input class="name" aria-label="Track 2 name" />
              ${btn("arm", "Arm for record")}
              <button class="tb wide" aria-label="Track effects">${icon("fxgreen")}${icon("tinydown")}</button>
              ${btn("mute", "Mute")}${btn("solo", "Solo", "slim")}
            </div>
            <div class="line">
              <label class="lbl" for="vol"><span>Vol:</span><span>0.0 dB</span></label>
              <input class="vol" id="vol" type="range" value="66" />
            </div>
            <div class="line">
              <label class="lbl" for="pan"><span>Pan:</span><span>Center</span></label>
              <input class="pan" id="pan" type="range" value="50" />
            </div>
          </div>
        </section>
      </div>
      <div class="rate">
        <label class="lbl" for="rate">Rate: 0.00</label>
        <div class="shuttle">
          <input class="jog" id="rate" type="range" value="50" />
          <svg class="mark" width="12" height="11"><path d="M1 10.500L6 .8l5 9.700z" fill="#f4ee2c" stroke="#444" /></svg>
        </div>
      </div>
    </div>`;
  }

  private timeline() {
    return html`<div class="stage">
      <div class="canvas">
        <div class="time">
          <div class="markers">
            <svg width="31" height="9"><path d="M0 4.500h28M30.500 1v7M25 2l4 2.500L25 7z" stroke="#5a7396" fill="#5a7396" /></svg>
            <svg width="9" height="8"><path d="M0 0h9L0 8z" fill="#f0ee22" /></svg>
          </div>
          <div class="cells ruler">${timecodes.map((t) => html`<span>${t}</span>`)}</div>
          <div class="lanes">
            <div class="grid cells">${timecodes.map(() => html`<span></span>`)}</div>
            <div class="lane video">
              <div class="clip">${icon("media")}${icon("crop")}${icon("fx")}</div>
            </div>
            <div class="lane"></div>
            <div class="lane blank"></div>
            <div class="playhead"></div>
          </div>
        </div>
        <div class="vs">
          <button class="sb" aria-label="Scroll up">${icon("up")}</button>
          <div class="vthumb"></div>
          <div class="dither"></div>
          <button class="sb" aria-label="Scroll down">${icon("down")}</button>
          <button class="sb" aria-label="Taller tracks">${icon("plus")}</button>
          <div class="vgap"></div>
          <button class="sb" aria-label="Shorter tracks">${icon("minus")}</button>
        </div>
      </div>
      <div class="hs">
        <button class="sb" aria-label="Scroll left">${icon("left")}</button>
        <div class="hthumb"></div>
        <button class="sb" aria-label="Scroll right">${icon("right")}</button>
        <button class="sb" aria-label="Zoom in">${icon("plus")}</button>
        <div class="gap"></div>
        <button class="sb" aria-label="Zoom out">${icon("minus")}</button>
        <button class="sb" aria-label="Zoom tool">${icon("lens")}</button>
      </div>
      <div class="bar bar26 transport" role="toolbar" aria-label="Transport">
        ${btn("record", "Record")}${sep}${btn("loop", "Loop playback")}${sep}
        ${btn("playstart", "Play from start")}${btn("play", "Play")}${btn("pause", "Pause")}${btn("stop", "Stop")}${sep}
        ${btn("prev", "Go to start")}${btn("next", "Go to end")}
        <div class="grow"></div>
        <div class="sink">00:01:24:25</div><div class="sink"></div><div class="sink"></div>
      </div>
      <div class="pointer">${icon("pointer")}</div>
    </div>`;
  }

  private explorer() {
    const slash = html`<svg width="8" height="18"><path d="M.5 17.500L7.500 .5" stroke="#888" /></svg>`;
    const names = ["Trimmer", "Media Pool", "Transitions", "Video FX", "Media Generators"];
    return html`<section class="dock">
      <div class="inner">
        ${this.dockGrip()}
        <div class="body">
          <div class="bar bar25">
            <label class="combo ui">${icon("desktop")}<select aria-label="Folder"><option>Desktop</option></select><span>${icon("down")}</span></label>
            ${btn("updir", "Up one level")}${btn("refresh", "Refresh")}${sep}
            ${btn("newdir", "New folder")}${btn("del", "Delete")}${btn("fold", "Add to favorites")}${sep}
            ${btn("play", "Start preview")}${btn("stop", "Stop preview")}${btn("auto", "Auto preview")}${sep}
            ${btn("webfind", "Get media from the web")}${sep}
            ${btn("views", "Views")}${btn("down", "View list", "arrow")}
          </div>
          <div class="panes ui">
            <ul class="pane tree">
              <li>${icon("desktop")}<span>Desktop</span></li>
              <li class="branch">
                <ul>${places.map((p) => html`<li><span class="tw ${p.open ? "box" : ""}"></span>${icon(p.glyph)}<span>${p.name}</span></li>`)}</ul>
              </li>
            </ul>
            <ul class="pane files">
              ${places.map((p) => html`<li>${icon(p.glyph)}<span>${p.name}</span></li>`)}
              <li>${icon("edge", 16)}<span>Microsoft Edge</span></li>
            </ul>
          </div>
        </div>
      </div>
      <div class="tabs" role="tablist">
        <svg width="8" height="18"><path d="M.5 .5L7.500 17.500" stroke="#888" /></svg>
        <button class="active" role="tab" aria-selected="true">Explorer</button>${slash}
        ${names.map((n) => html`<button role="tab">${n}</button>${slash}`)}
        <div class="rest"></div>
      </div>
    </section>`;
  }

  private mixer() {
    const marks = Array.from({ length: 19 }, (_, i) => (i % 2 ? "" : String(3 + i * 3)));
    return html`<section class="dock">
      <div class="inner">
        ${this.dockGrip()}
        <div class="body">
          <div class="bar bar29">${btn("props", "Mixer properties")}${btn("vol3d", "Downmix output")}${btn("addfx", "Insert bus effect")}</div>
          <div class="mixer">
            <div class="row master"><button aria-label="Master bus">${icon("bus")}</button><span>Master</span></div>
            <div class="row minis">${btn("fx", "Master effects")}${btn("mute", "Mute")}${btn("solo", "Solo")}</div>
            <div class="strip">
              <div class="fader">
                <input class="gain" type="range" aria-label="Master volume" value="67" />
                ${icon("lock")}
              </div>
              <div class="meters">
                <span>-Inf.</span><span></span><span>-Inf.</span>
                <div class="meter"></div>
                <ul class="scale">${marks.map((m) => html`<li class=${m ? "major" : ""}>${m}</li>`)}</ul>
                <div class="meter"></div>
                <span>0.0</span><span></span><span>0.0</span>
              </div>
            </div>
          </div>
        </div>
      </div>
    </section>`;
  }

  private preview() {
    return html`<section class="dock">
      <div class="inner">
        ${this.dockGrip()}
        <div class="body">
          <div class="bar bar26">
            ${btn("props", "Video properties")}${sep}${btn("extmon", "Preview on external monitor")}${sep}
            ${btn("fx", "Video output effects")}${btn("split", "Split screen view")}${btn("down", "Split options", "arrow")}
            <button class="quality">Preview (Auto)</button>${btn("tinydown", "Quality list", "arrow")}
            ${btn("hash", "Overlays")}${btn("down", "Overlay list", "arrow")}${sep}
            ${btn("copy", "Copy snapshot")}${btn("save", "Save snapshot")}
          </div>
          <div class="screen"><div></div></div>
          <dl class="info">
            <dt>Project:</dt><dd>720x480x32, 29.970i</dd><dt>Frame:</dt><dd>2,545</dd>
            <dt>Preview:</dt><dd class="red">180x120x32, 29.970p</dd><dt>Display:</dt><dd class="red">240x160x32</dd>
          </dl>
        </div>
      </div>
    </section>`;
  }

  private taskbar() {
    return html`<footer class="taskbar">
      <button class="start" aria-label="Start">${icon("win")}</button>
      <label class="find">${icon("search")}<input placeholder="Type here to search" aria-label="Search" /></label>
      <button class="view" aria-label="Task view">${icon("taskview")}</button>
      <button aria-label="Copilot">${icon("copilot")}</button>
      <button class="run" aria-label="Microsoft Edge">${icon("edge")}</button>
      <button aria-label="File Explorer">${icon("files", 22)}</button>
      <button aria-label="Microsoft Store">${icon("store")}</button>
      <button aria-label="Mail">${icon("mail")}</button>
      <button class="run current" aria-label="Vegas">${icon("vegas")}</button>
      <button class="run" aria-label="Clips">${icon("clap")}</button>
      <div class="tray">
        <button class="news" aria-label="News">${icon("news")}</button>
        <button aria-label="Hidden icons">${icon("chev")}</button>
        <button aria-label="Meet now">${icon("meet")}</button>
        <button aria-label="Network">${icon("lan")}</button>
        <button aria-label="Volume">${icon("sound")}</button>
        <button class="when"><span>9:43 AM<br />11/17/2025</span></button>
        <button class="bell" aria-label="Notifications">${icon("note")}</button>
        <span class="peek"></span>
      </div>
    </footer>`;
  }

  render() {
    const menus = ["File", "Edit", "View", "Insert", "Tools", "Options", "Help"];
    return html`
      <header class="ui title">
        ${icon("vegas", 16)}<span class="grow">Untitled * - Sony Vegas 4.0 DEMO</span>
        <div class="row">
          <button class="caption" aria-label="Minimize">${icon("min")}</button>
          <button class="caption" aria-label="Restore">${icon("restore")}</button>
          <button class="caption" aria-label="Close">${icon("close")}</button>
        </div>
      </header>
      <nav class="menu ui">${menus.map((m) => html`<button>${m}</button>`)}</nav>
      ${this.mainBar()}
      <main class="edit">${this.trackList()}${this.timeline()}</main>
      <div class="docks">${this.explorer()}${this.mixer()}${this.preview()}</div>
      <div class="status"><div>Record Time: 80:59:20</div></div>
      ${this.taskbar()}
    `;
  }
}
